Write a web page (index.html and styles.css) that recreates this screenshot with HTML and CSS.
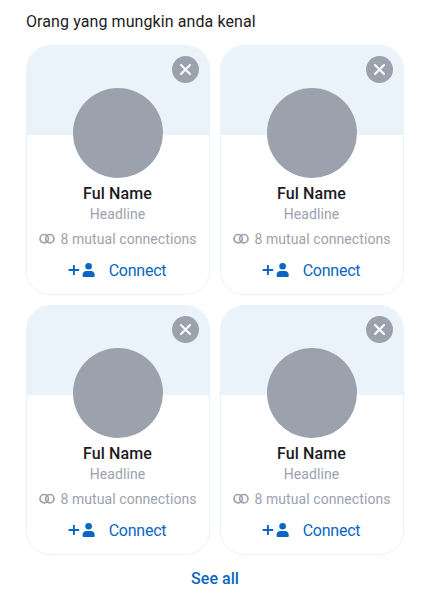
FILE: index.html
```
<!DOCTYPE html>
<html lang="id">
<head>
<meta charset="utf-8">
<title>Orang yang mungkin anda kenal</title>
<link rel="stylesheet" href="styles.css">
</head>
<body>
<svg class="sprite" aria-hidden="true">
  <symbol id="close" viewBox="0 0 27 27"><path d="M9 9l9 9M18 9l-9 9" fill="none" stroke="#fff" stroke-width="2" stroke-linecap="round"/></symbol>
  <symbol id="mutual" viewBox="0 0 16 12"><g fill="none" stroke="currentColor" stroke-width="1.7"><circle cx="5.200" cy="5.700" r="4.200"/><circle cx="10.800" cy="5.700" r="4.200"/></g></symbol>
  <symbol id="connect" viewBox="0 0 28 16"><path d="M.6 8h10.600M5.900 2.900v10.200" fill="none" stroke="currentColor" stroke-width="1.9"/><circle cx="20.600" cy="4.300" r="3.300" fill="currentColor"/><path d="M14.600 14v-1.200c0-2.100 1.700-3.800 3.800-3.800h4.500c2.100 0 3.800 1.700 3.800 3.800v1.200q0 1-1 1H15.600q-1 0-1-1z" fill="currentColor"/></symbol>
</svg>
<main class="page">
  <h1 class="title">Orang yang mungkin anda kenal</h1>
  <section class="grid">
    <article class="card">
      <div class="cover"><button class="close" aria-label="Close"><svg><use href="#close"/></svg></button></div>
      <div class="avatar"></div>
      <h2 class="name">Ful Name</h2>
      <p class="headline">Headline</p>
      <p class="mutual"><svg><use href="#mutual"/></svg><span>8 mutual connections</span></p>
      <button class="connect"><svg><use href="#connect"/></svg><span>Connect</span></button>
    </article>
    <article class="card">
      <div class="cover"><button class="close" aria-label="Close"><svg><use href="#close"/></svg></button></div>
      <div class="avatar"></div>
      <h2 class="name">Ful Name</h2>
      <p class="headline">Headline</p>
      <p class="mutual"><svg><use href="#mutual"/></svg><span>8 mutual connections</span></p>
      <button class="connect"><svg><use href="#connect"/></svg><span>Connect</span></button>
    </article>
    <article class="card">
      <div class="cover"><button class="close" aria-label="Close"><svg><use href="#close"/></svg></button></div>
      <div class="avatar"></div>
      <h2 class="name">Ful Name</h2>
      <p class="headline">Headline</p>
      <p class="mutual"><svg><use href="#mutual"/></svg><span>8 mutual connections</span></p>
      <button class="connect"><svg><use href="#connect"/></svg><span>Connect</span></button>
    </article>
    <article class="card">
      <div class="cover"><button class="close" aria-label="Close"><svg><use href="#close"/></svg></button></div>
      <div class="avatar"></div>
      <h2 class="name">Ful Name</h2>
      <p class="headline">Headline</p>
      <p class="mutual"><svg><use href="#mutual"/></svg><span>8 mutual connections</span></p>
      <button class="connect"><svg><use href="#connect"/></svg><span>Connect</span></button>
    </article>
  </section>
  <a class="see-all">See all</a>
</main>
</body>
</html>
```
FILE: styles.css
```
* { box-sizing: border-box; margin: 0; padding: 0; }
body { background: #fff; color: #1c1c1e; font-family: Roboto, "Liberation Sans", sans-serif; }
button { border: 0; background: none; font: inherit; }
.sprite { display: none; }
.page { display: flex; flex-direction: column; width: 430px; height: 600px; padding: 11px 26px 0; overflow: hidden; }
.title { height: 34px; font-size: 16px; line-height: 22px; font-weight: 400; letter-spacing: 0.09px; }
.grid { display: grid; grid-template-columns: 184px 184px; grid-auto-rows: 250px; gap: 10px; }
.card { display: flex; flex-direction: column; align-items: center; border: 1px solid #eaf2fa; border-radius: 24px; overflow: hidden; background: #fff; }
.cover { display: flex; justify-content: flex-end; align-self: stretch; height: 89px; padding: 10px 10px 0 0; background: #eaf2fa; }
.close { width: 27px; height: 27px; border-radius: 50%; background: #9ba2ae; }
.close svg { display: block; width: 27px; height: 27px; }
.avatar { flex: none; width: 90px; height: 90px; margin-top: -47.5px; margin-right: 0.5px; border-radius: 50%; background: #9ba2ae; }
.name { margin-top: 6.5px; margin-right: 1px; font-size: 16px; line-height: 20px; font-weight: 500; letter-spacing: 0.13px; }
.headline { margin-top: 1px; margin-right: 1px; font-size: 14px; line-height: 18px; letter-spacing: 0.1px; color: #9ba2ae; }
.mutual { display: flex; align-items: center; gap: 5px; margin-top: 7px; font-size: 14px; line-height: 18px; letter-spacing: 0.08px; color: #9ba2ae; white-space: nowrap; }
.mutual svg { width: 16px; height: 12px; margin-bottom: 1px; }
.connect { display: flex; align-items: center; gap: 13px; margin-top: 12.5px; font-size: 16px; line-height: 20px; letter-spacing: -0.24px; color: #0a66c2; }
.connect svg { width: 28px; height: 16px; margin-left: -2px; margin-bottom: 2px; }
.see-all { align-self: center; margin-top: 13px; font-size: 16px; line-height: 22px; font-weight: 500; letter-spacing: 0.05px; color: #0a66c2; }
```
